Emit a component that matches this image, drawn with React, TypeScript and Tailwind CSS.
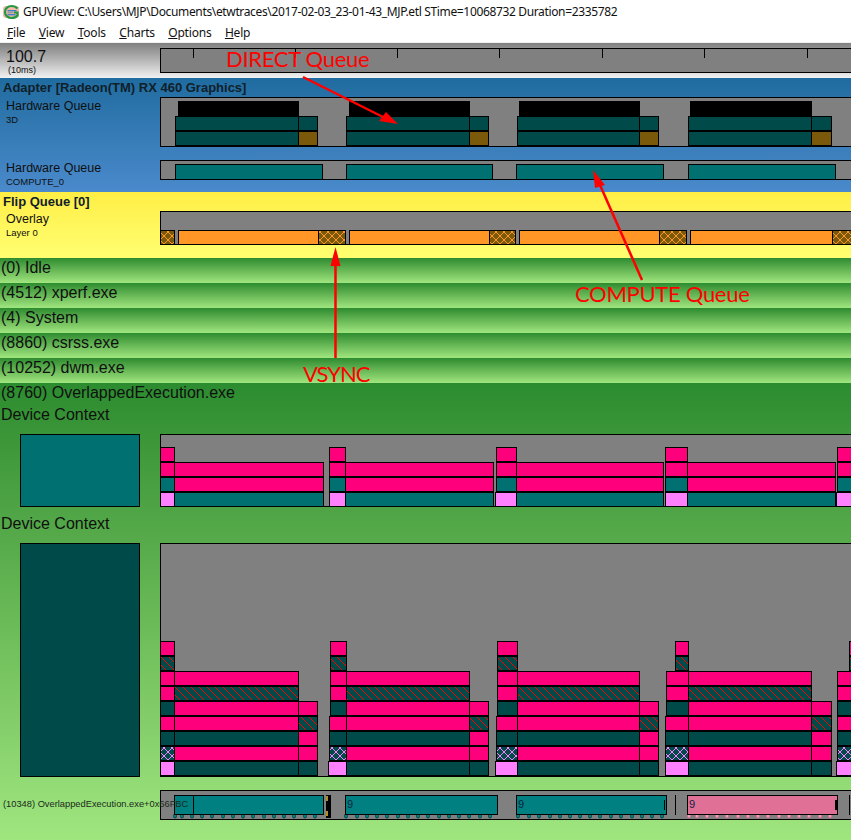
import type { ReactNode } from "react";

const DARK = "#004a4a";
const TEAL = "#007070";
const PINK = "#ff007c";
const LILAC = "#ff80ff";
const BROWN = "#7a5a0a";
const ORANGE = "#ff9626";
const HATCH_RED = "url(#hatchRed)";
const CROSS_LILAC = "url(#crossLilac)";
const CROSS_ORANGE = "url(#crossOrange)";

const pixels = Array.from({ length: 8 }, (_, i) => i);

// one cell of a GDI style 8x8 hatch brush
function Hatch({ id, bg, fg, cross }: { id: string; bg: string; fg: string; cross?: boolean }) {
  return (
    <pattern id={id} x="0" y="0" width="8" height="8" patternUnits="userSpaceOnUse">
      <rect width="8" height="8" fill={bg} />
      {pixels.map((i) => (
        <rect key={i} x={i} y={i} width="1" height="1" fill={fg} />
      ))}
      {cross && pixels.map((i) => <rect key={i} x={7 - i} y={i} width="1" height="1" fill={fg} />)}
    </pattern>
  );
}

// x1 is the first pixel past the right border
function Bar({ x0, x1, y, h = 14, fill }: { x0: number; x1: number; y: number; h?: number; fill: string }) {
  return <rect x={x0 + 0.5} y={y + 0.5} width={x1 - x0 - 1} height={h} fill={fill} stroke="#000" strokeWidth="1" />;
}

// svg coordinates inside a track are page coordinates
function Track({ top, height, children }: { top: number; height: number; children?: ReactNode }) {
  return (
    <div
      className="min-w-0 flex-1 border border-r-0 border-black bg-[#808080]"
      style={{ height }}
    >
      <svg className="block h-full w-full overflow-visible" shapeRendering="crispEdges">
        <g transform={`translate(-161 ${-(top + 1)})`}>{children}</g>
      </svg>
    </div>
  );
}

const rulerTicks = [193, 295, 397, 499, 602, 704, 807];
const direct = [
  [178, 299, 175, 318],
  [349, 470, 346, 489],
  [519, 640, 517, 659],
  [690, 812, 688, 832],
];
const compute = [
  [175, 323],
  [346, 493],
  [516, 664],
  [688, 836],
];
const flip = [
  [178, 319, 346],
  [349, 490, 516],
  [519, 660, 687],
  [690, 833, 860],
];

// small box start per row, long bar start and end
const dc1 = [
  { a: 160, b: 160, c: 160, x: 174, e: 324 },
  { a: 329, b: 329, c: 329, x: 345, e: 494 },
  { a: 496, b: 496, c: 495, x: 516, e: 664 },
  { a: 665, b: 665, c: 665, x: 687, e: 836 },
  { a: 837, b: 837, c: 836, x: 860, e: 870 },
];
const dc2 = [
  { t: 160, m: 160, l: 160, b: 160, x: 174, e: 299, r: 318 },
  { t: 330, m: 330, l: 329, b: 328, x: 346, e: 470, r: 489 },
  { t: 497, m: 497, l: 496, b: 495, x: 517, e: 640, r: 659 },
  { t: 675, m: 666, l: 665, b: 665, x: 688, e: 812, r: 832 },
  { t: 849, m: 837, l: 837, b: 836, x: 860, e: 870, r: 880 },
];

const pkts = [
  { color: "#008080", edge: "#003a3a", xs: [173, 180, 190, 200, 210, 221, 231, 241, 251, 262, 272, 282, 292, 303, 313] },
  { color: "#008080", edge: "#003a3a", xs: [344, 355, 365, 375, 385, 396, 406, 416, 426, 437, 447, 457, 467, 478, 488] },
  { color: "#008080", edge: "#003a3a", xs: [516, 527, 537, 548, 558, 568, 578, 588, 598, 609, 619, 630, 640, 650, 660] },
  { color: "#f0a0b8", edge: "#d8608a", xs: [687, 695, 705, 715, 725, 736, 746, 756, 766, 777, 787, 797, 807, 818, 828] },
];

function Title({ children }: { children: ReactNode }) {
  return <div className="h-[19px] pl-[3px] text-[13px] leading-[19px] font-bold text-[#10202a]">{children}</div>;
}

function Label({ name, sub, nameClass = "" }: { name: string; sub: string; nameClass?: string }) {
  return (
    <div className={`w-[160px] shrink-0 pl-[6px] ${nameClass}`}>
      <div className="text-[12.5px] leading-[15px] text-[#101010]">{name}</div>
      <div className="text-[9.5px] leading-[11px] text-[#101010]">{sub}</div>
    </div>
  );
}

function ProcessRow({ children }: { children: ReactNode }) {
  return (
    <div className="h-[25px] bg-linear-to-b from-[#2b8c2f] to-[#a0e67f] pl-px text-[16px] leading-[19px] text-[#101010]">
      {children}
    </div>
  );
}

function MenuItem({ first, rest }: { first: string; rest: string }) {
  return (
    <span>
      <span className="underline">{first}</span>
      {rest}
    </span>
  );
}

export default function App() {
  return (
    <div className="relative h-[840px] w-[851px] overflow-hidden bg-white font-['Liberation_Sans',sans-serif]">
      <svg className="absolute h-0 w-0">
        <defs>
          <Hatch id="hatchRed" bg={DARK} fg="#ff0000" />
          <Hatch id="crossLilac" bg={DARK} fg={LILAC} cross />
          <Hatch id="crossOrange" bg={BROWN} fg={ORANGE} cross />
        </defs>
      </svg>

      {/* Title bar */}
      <div className="flex h-[24px] items-center pl-[3px] font-['Noto_Sans',sans-serif] text-[12px] tracking-[-0.35px] whitespace-nowrap text-[#111]">
        <svg width="17" height="16" viewBox="0 0 17 16" className="mr-[3px] shrink-0">
          <rect x="0" y="2" width="16" height="12" rx="3" fill="#f3b9ad" />
          <path d="M14.5 4.5C13 2.6 11 2 8.5 2 5 2 2 4.4 2 8s3 6 6.5 6c2.500 0 4.600-.7 6-2.500V8.500H11" fill="none" stroke="#1f9a3c" strokeWidth="2.200" />
          <rect x="4.500" y="6" width="9" height="1.400" fill="#3f7fc8" />
          <rect x="4.500" y="8" width="6" height="1.400" fill="#9a9a9a" />
          <rect x="4.500" y="10" width="8" height="1.400" fill="#3f7fc8" />
        </svg>
        <span>GPUView: C:\Users\MJP\Documents\etwtraces\2017-02-03_23-01-43_MJP.etl STime=10068732 Duration=2335782</span>
      </div>

      {/* Menu */}
      <div className="flex h-[19px] items-center gap-[13.4px] border-b border-[#f0f0f0] pl-[7px] font-['Noto_Sans',sans-serif] text-[12px] tracking-[-0.2px] text-[#111]">
        <MenuItem first="F" rest="ile" />
        <MenuItem first="V" rest="iew" />
        <MenuItem first="T" rest="ools" />
        <MenuItem first="C" rest="harts" />
        <MenuItem first="O" rest="ptions" />
        <MenuItem first="H" rest="elp" />
      </div>

      {/* Ruler */}
      <div className="flex h-[35px] bg-linear-to-b from-[#808080] to-[#f2f2f2] pt-[5px]">
        <div className="w-[160px] shrink-0 pl-[6px] text-[#101010]">
          <div className="text-[16px] leading-[18px]">100.7</div>
          <div className="pl-[2px] text-[9px] leading-[8px]">(10ms)</div>
        </div>
        <Track top={48} height={25}>
          {rulerTicks.map((x) => (
            <rect key={x} x={x} y="48" width="1" height="10" fill="#000" />
          ))}
        </Track>
      </div>

      {/* Adapter */}
      <div className="h-[114px] bg-linear-to-b from-[#1f6ca0] to-[#4a8acc]">
        <Title>Adapter [Radeon(TM) RX 460 Graphics]</Title>
        <div className="flex">
          <Label name="Hardware Queue" sub="3D" nameClass="pt-[2px]" />
          <Track top={97} height={50}>
            {direct.map(([bx, e, x, r]) => (
              <g key={x}>
                <rect x={bx} y="101" width={e - bx} height="15" fill="#000" />
                <Bar x0={x} x1={e} y={116} fill={DARK} />
                <Bar x0={e - 1} x1={r} y={116} fill={DARK} />
                <Bar x0={x} x1={e} y={131} fill={DARK} />
                <Bar x0={e - 1} x1={r} y={131} fill={BROWN} />
              </g>
            ))}
          </Track>
        </div>
        <div className="mt-[13px] flex">
          <Label name="Hardware Queue" sub="COMPUTE_0" nameClass="pt-[1px]" />
          <Track top={160} height={20}>
            {compute.map(([x, e]) => (
              <Bar key={x} x0={x} x1={e} y={164} h={15} fill={TEAL} />
            ))}
          </Track>
        </div>
      </div>

      {/* Flip queue */}
      <div className="h-[66px] bg-linear-to-b from-[#ffee44] to-[#ffff70]">
        <Title>Flip Queue [0]</Title>
        <div className="flex">
          <Label name="Overlay" sub="Layer 0" nameClass="pt-[1px]" />
          <Track top={211} height={34}>
            <Bar x0={160} x1={175} y={230} fill={CROSS_ORANGE} />
            {flip.map(([x, e, r]) => (
              <g key={x}>
                <Bar x0={x} x1={e} y={230} fill={ORANGE} />
                <Bar x0={e - 1} x1={r} y={230} fill={CROSS_ORANGE} />
              </g>
            ))}
          </Track>
        </div>
      </div>

      {/* Processes */}
      <ProcessRow>(0) Idle</ProcessRow>
      <ProcessRow>(4512) xperf.exe</ProcessRow>
      <ProcessRow>(4) System</ProcessRow>
      <ProcessRow>(8860) csrss.exe</ProcessRow>
      <ProcessRow>(10252) dwm.exe</ProcessRow>

      <div className="h-[457px] bg-linear-to-b from-[#2b8c2f] to-[#a0e67f] text-[#101010]">
        <div className="h-[22px] pl-px text-[16px] leading-[19px]">(8760) OverlappedExecution.exe</div>
        <div className="h-[29px] pt-px pl-px text-[16px] leading-[18px]">Device Context</div>

        <div className="flex">
          <div className="w-[160px] shrink-0 pl-[20px]">
            <div className="h-[73px] w-[120px] border border-black bg-[#007070]" />
          </div>
          <Track top={434} height={73}>
            {dc1.map((g) => (
              <g key={g.a}>
                <Bar x0={g.a} x1={g.x + 1} y={447} fill={PINK} />
                <Bar x0={g.a} x1={g.x + 1} y={462} fill={PINK} />
                <Bar x0={g.x} x1={g.e} y={462} fill={PINK} />
                <Bar x0={g.b} x1={g.x + 1} y={477} fill={TEAL} />
                <Bar x0={g.x} x1={g.e} y={477} fill={PINK} />
                <Bar x0={g.c} x1={g.x + 1} y={492} fill={LILAC} />
                <Bar x0={g.x} x1={g.e} y={492} fill={TEAL} />
              </g>
            ))}
          </Track>
        </div>

        <div className="h-[36px] pt-[8px] pl-px text-[16px] leading-[18px]">Device Context</div>

        <div className="flex">
          <div className="w-[160px] shrink-0 pl-[20px]">
            <div className="h-[234px] w-[120px] border border-black bg-[#004a4a]" />
          </div>
          <Track top={543} height={234}>
            {dc2.map((g) => (
              <g key={g.t}>
                <Bar x0={g.t} x1={g.x + 1} y={641} fill={PINK} />
                <Bar x0={g.t} x1={g.x + 1} y={656} fill={HATCH_RED} />
                <Bar x0={g.m} x1={g.x + 1} y={671} fill={PINK} />
                <Bar x0={g.x} x1={g.e} y={671} fill={PINK} />
                <Bar x0={g.m} x1={g.x + 1} y={686} fill={PINK} />
                <Bar x0={g.x} x1={g.e} y={686} fill={HATCH_RED} />
                <Bar x0={g.m} x1={g.x + 1} y={701} fill={DARK} />
                <Bar x0={g.x} x1={g.e} y={701} fill={PINK} />
                <Bar x0={g.e - 1} x1={g.r} y={701} fill={PINK} />
                <Bar x0={g.l} x1={g.x + 1} y={716} fill={PINK} />
                <Bar x0={g.x} x1={g.e} y={716} fill={PINK} />
                <Bar x0={g.e - 1} x1={g.r} y={716} fill={HATCH_RED} />
                <Bar x0={g.l} x1={g.x + 1} y={731} fill={DARK} />
                <Bar x0={g.x} x1={g.e} y={731} fill={DARK} />
                <Bar x0={g.e - 1} x1={g.r} y={731} fill={PINK} />
                <Bar x0={g.l} x1={g.x + 1} y={746} fill={CROSS_LILAC} />
                <Bar x0={g.x} x1={g.e} y={746} fill={PINK} />
                <Bar x0={g.e - 1} x1={g.r} y={746} fill={PINK} />
                <Bar x0={g.b} x1={g.x + 1} y={761} fill={LILAC} />
                <Bar x0={g.x} x1={g.e} y={761} fill={DARK} />
                <Bar x0={g.e - 1} x1={g.r} y={761} fill={DARK} />
              </g>
            ))}
          </Track>
        </div>

        {/* Thread row */}
        <div className="mt-[13px] flex">
          <div className="relative z-10 flex h-[30px] w-[160px] shrink-0 items-center pb-px pl-[3px] text-[9.3px] whitespace-nowrap text-[#1a2a1a]">
            (10348) OverlappedExecution.exe+0x66FBC
          </div>
          <Track top={790} height={30}>
            {pkts.map((p) =>
              p.xs.map((x) => (
                <rect
                  key={x}
                  x={x + 0.5}
                  y="814"
                  width="3"
                  height="4"
                  rx="1.500"
                  fill={p.color}
                  stroke={p.edge}
                  strokeWidth="0.800"
                  shapeRendering="geometricPrecision"
                />
              )),
            )}
            <Bar x0={174} x1={194} y={795} h={19} fill="#008080" />
            <Bar x0={193} x1={324} y={795} h={19} fill="#008080" />
            <rect x="326" y="795" width="5" height="23" fill="#000" />
            <rect x="326" y="796" width="2" height="5" fill="#b09020" />
            <rect x="326" y="811" width="2" height="5" fill="#b09020" />
            <Bar x0={345} x1={498} y={795} h={19} fill="#008080" />
            <Bar x0={516} x1={667} y={795} h={19} fill="#008080" />
            <rect x="664" y="800" width="1" height="10" fill="#000" />
            <rect x="675" y="795" width="1" height="20" fill="#000" />
            <Bar x0={687} x1={838} y={795} h={19} fill="#e07095" />
            <rect x="835" y="800" width="2" height="10" fill="#000" />
            <rect x="849" y="795" width="1" height="20" fill="#000" />
            <g fontSize="11" fill="#0b2540" style={{ fontFamily: "'Liberation Sans', sans-serif" }}>
              <text x="347" y="808">9</text>
              <text x="518" y="808">9</text>
              <text x="689" y="808">9</text>
            </g>
          </Track>
        </div>
      </div>

      {/* Annotations pasted over the capture */}
      <svg className="pointer-events-none absolute top-0 left-0 z-20" width="851" height="840">
        <g stroke="#ff0000" strokeWidth="2.500" fill="#ff0000">
          <line x1="303" y1="77" x2="385" y2="118" />
          <line x1="642" y1="280" x2="600" y2="185" />
          <line x1="335.500" y1="358" x2="335.500" y2="262" />
        </g>
        <g fill="#ff0000">
          <polygon points="398,124 386,112 379,121" />
          <polygon points="593,170 605,185 595,188" />
          <polygon points="335.500,247 340.500,266 330.500,266" />
        </g>
      </svg>
      <div className="pointer-events-none absolute top-0 left-0 z-20 font-['Lato',sans-serif] text-[22px] leading-[28px] tracking-[-0.3px] whitespace-nowrap text-[#ff0000]">
        <span className="absolute top-[45px] left-[226px]">DIRECT Queue</span>
        <span className="absolute top-[280px] left-[575px]">COMPUTE Queue</span>
        <span className="absolute top-[360px] left-[303px] tracking-[-1px]">VSYNC</span>
      </div>
    </div>
  );
}
